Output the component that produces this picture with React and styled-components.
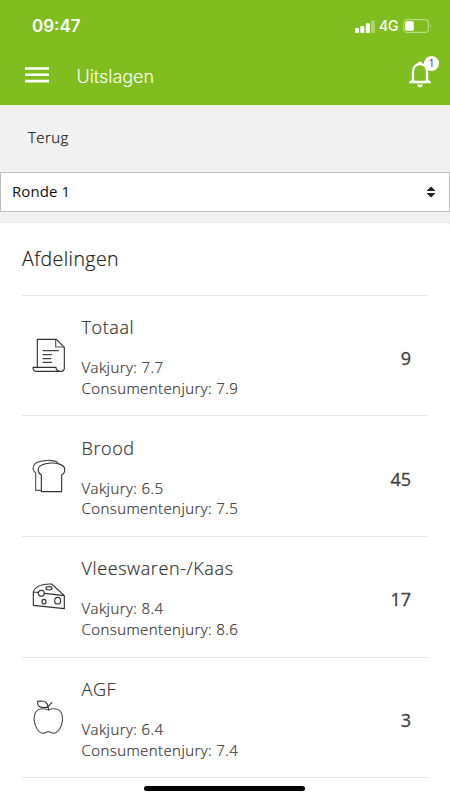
import React from "react";
import styled, { createGlobalStyle } from "styled-components";

const GlobalStyle = createGlobalStyle`
  * { box-sizing: border-box; }
  html, body { margin: 0; padding: 0; background: #fff; overflow: hidden; }
  body { font-family: "Open Sans", sans-serif; color: #333; }
`;

const Screen = styled.div`
  position: relative;
  width: 450px;
  height: 800px;
  overflow: hidden;
  display: flex;
  flex-direction: column;
  background: #f1f1f1;
`;

const Header = styled.header`
  flex: none;
  height: 105px;
  background: #80be1f;
  color: #fff;
  font-family: Inter, sans-serif;
`;

const StatusBar = styled.div`
  height: 52px;
  padding: 0 18px 0 32px;
  display: flex;
  align-items: center;
  justify-content: space-between;
`;

const Time = styled.div`
  font-size: 17px;
  font-weight: 600;
  line-height: 20px;
  letter-spacing: 0;
`;

const StatusIcons = styled.div`
  display: flex;
  align-items: center;
`;

const Network = styled.span`
  width: 20px;
  margin: 0 4px 0 4px;
  font-size: 14px;
  line-height: 18px;
  font-weight: 500;
  letter-spacing: -0.3px;
`;

const Toolbar = styled.div`
  height: 48px;
  padding: 0 11px 0 25px;
  display: flex;
  align-items: center;
`;

const MenuIcon = styled.svg`
  display: block;
  width: 24px;
  height: 16px;
  fill: #fff;
`;

const MenuButton = styled.button`
  padding: 0;
  border: 0;
  background: none;
  margin-top: -2px;
`;

const PageTitle = styled.h1`
  flex: 1;
  margin: 1px 0 0 27.5px;
  font-size: 18px;
  line-height: 24px;
  font-weight: 350;
  letter-spacing: -0.05px;
`;

const BellButton = styled.button`
  position: relative;
  width: 31px;
  height: 34px;
  padding: 0;
  border: 0;
  background: none;
  margin-top: -6px;
  svg { display: block; }
`;

const Badge = styled.span`
  position: absolute;
  top: 0;
  right: 0;
  width: 15px;
  height: 15px;
  border-radius: 50%;
  background: #fff;
  color: #333;
  font-family: "Open Sans", sans-serif;
  font-size: 10px;
  line-height: 15px;
  text-align: center;
`;

const BackBar = styled.nav`
  flex: none;
  height: 67px;
  padding: 0 28px 4px;
  display: flex;
  align-items: center;
  font-size: 15px;
  font-weight: 300;
  letter-spacing: 0.4px;
  color: #222;
  -webkit-text-stroke: 0.25px currentColor;
`;

const Select = styled.div`
  flex: none;
  height: 40px;
  padding: 0 13px 0 11px;
  border: 1px solid #bdbdbd;
  background: #fff;
  display: flex;
  align-items: center;
  justify-content: space-between;
  color: #111;
  font-size: 15px;
  letter-spacing: 0.1px;
`;

const SelectValue = styled.span`
  margin-top: -2px;
`;

const Card = styled.main`
  flex: 1;
  margin-top: 11px;
  padding: 0 22px;
  background: #fff;
  border-radius: 2px 2px 0 0;
  box-shadow: 0 0 2px rgba(0, 0, 0, 0.1);
`;

const SectionTitle = styled.h2`
  height: 71.5px;
  margin: 0;
  font-size: 19.5px;
  line-height: 72px;
  font-weight: 300;
  letter-spacing: 0.45px;
  color: #222;
  -webkit-text-stroke: 0.2px currentColor;
`;

const Row = styled.section`
  height: 120.7px;
  border-top: 1px solid #e7e7e7;
  display: flex;
  align-items: center;
`;

const IconFrame = styled.svg`
  flex: none;
  width: 54px;
  height: 60px;
  margin-top: -1px;
  fill: none;
  stroke: #333;
  stroke-width: 3.4;
  stroke-linejoin: round;
  stroke-linecap: round;
`;

const Details = styled.div`
  flex: 1;
  padding-top: 1.4px;
  margin-left: 5.5px;
`;

const Name = styled.h3`
  margin: 0 0 17px;
  font-size: 18px;
  line-height: 26px;
  font-weight: 300;
  letter-spacing: 0.6px;
  color: #333;
  -webkit-text-stroke: 0.2px currentColor;
`;

const Score = styled.div`
  font-size: 15px;
  line-height: 20.6px;
  font-weight: 300;
  letter-spacing: 0.42px;
  color: #333;
  -webkit-text-stroke: 0.2px currentColor;
`;

const Count = styled.div`
  margin-right: 17px;
  padding-top: 5px;
  font-size: 18px;
  line-height: 24px;
  font-weight: 400;
  color: #444042;
  -webkit-text-stroke: 0.3px currentColor;
`;

const Closing = styled.div`
  border-top: 1px solid #e7e7e7;
`;

const HomeIndicator = styled.div`
  position: absolute;
  left: 144px;
  bottom: 9px;
  width: 161px;
  height: 5px;
  border-radius: 3px;
  background: #000;
`;

const DocumentIcon = () => (
  <IconFrame viewBox="6 0 162 180">
    <path d="M52 126V43H109L133 67V130Q132 140 120 139Q108 138 108 127H39Q38 138 49 139H122" />
    <path d="M107 43V66H133" stroke="#555" />
    <path d="M69 77H115M69 89H95M69 101H92M69 112H95" stroke="#444" />
  </IconFrame>
);

const BreadIcon = () => (
  <IconFrame viewBox="6 2 162 180">
    <path d="M64 139V89Q53 82 55 71C59 47 130 47 134 70Q136 83 125 89V139Z" />
    <path d="M62 135H47V82Q37 76 40 64C44 41 107 42 114 53" stroke="#555" />
  </IconFrame>
);

const CheeseIcon = () => (
  <IconFrame viewBox="6 -1 162 180">
    <path d="M55 78L40 77V117L133 127V88L74 81M40 76C47 58 65 52 95 53L133 88" />
    <circle cx="64" cy="81" r="9" />
    <ellipse cx="87" cy="66" rx="9" ry="5" />
    <ellipse cx="72" cy="106" rx="6" ry="7" />
    <ellipse cx="113" cy="103" rx="9" ry="10" />
  </IconFrame>
);

const AppleIcon = () => (
  <IconFrame viewBox="6 1 162 180">
    <path d="M85 70C72 65 50 62 44 84C38 108 52 137 68 140C76 140 78 135 85 135C92 135 95 141 103 139C120 136 132 106 126 84C120 62 98 65 85 70Z" stroke="#555" />
    <path d="M86 70Q85 63 84 60Q83 43 63 43L53 44Q51 60 66 62Q77 64 84 60L95 48" />
  </IconFrame>
);

const departments = [
  { name: "Totaal", Icon: DocumentIcon, expert: "7.7", consumer: "7.9", count: 9 },
  { name: "Brood", Icon: BreadIcon, expert: "6.5", consumer: "7.5", count: 45 },
  { name: "Vleeswaren-/Kaas", Icon: CheeseIcon, expert: "8.4", consumer: "8.6", count: 17 },
  { name: "AGF", Icon: AppleIcon, expert: "6.4", consumer: "7.4", count: 3 },
];

const SignalIcon = () => (
  <svg width="20" height="13" viewBox="0 0 20 13" fill="#fff">
    <rect x="0" y="8" width="4" height="5" rx="0.8" />
    <rect x="5.3" y="6" width="4" height="7" rx="0.8" />
    <rect x="10.8" y="3.2" width="4" height="9.8" rx="0.8" />
    <rect x="16" y="0.5" width="4" height="12.5" rx="0.8" opacity="0.35" />
  </svg>
);

const BatteryIcon = () => (
  <svg width="29" height="14" viewBox="0 0 29 14">
    <rect x="0.6" y="0.6" width="24.8" height="12.8" rx="3.5" fill="none" stroke="#fff" strokeOpacity="0.45" strokeWidth="1.1" />
    <rect x="2.2" y="2.2" width="8.6" height="9.6" rx="1.5" fill="#fff" />
    <path d="M27 5Q28.7 7 27 9Z" fill="#fff" opacity="0.5" />
  </svg>
);

const BellIcon = () => (
  <svg width="31" height="34" viewBox="0 0 31 34">
    <path d="M5 25V16C5 11 8 8.2 12 8.2S19 11 19 16V25" fill="none" stroke="#fff" strokeWidth="2.3" />
    <path d="M1 27.3V26L4 23.2V24.8H20V23.2L23 26V27.3Z" fill="#fff" />
    <path d="M9.6 8.5V7.8A2.4 2.4 0 0 1 14.4 7.8V8.5ZM9 28.6H15Q14.5 31.3 12 31.3T9 28.6Z" fill="#fff" />
  </svg>
);

const SortIcon = () => (
  <svg width="10" height="12" viewBox="0 0 10 12" fill="#222">
    <path d="M5 0.6L9.5 5H0.5ZM5 11.4L0.5 7H9.5Z" />
  </svg>
);

export default function App() {
  return (
    <>
      <GlobalStyle />
      <Screen>
        <Header>
          <StatusBar>
            <Time>09:47</Time>
            <StatusIcons>
              <SignalIcon />
              <Network>4G</Network>
              <BatteryIcon />
            </StatusIcons>
          </StatusBar>
          <Toolbar>
            <MenuButton aria-label="Menu">
              <MenuIcon viewBox="0 0 24 16">
                <path d="M0 0.2H24V2.8H0ZM0 6.5H24V9.1H0ZM0 12.8H24V15.4H0Z" />
              </MenuIcon>
            </MenuButton>
            <PageTitle>Uitslagen</PageTitle>
            <BellButton>
              <BellIcon />
              <Badge>1</Badge>
            </BellButton>
          </Toolbar>
        </Header>
        <BackBar>Terug</BackBar>
        <Select>
          <SelectValue>Ronde 1</SelectValue>
          <SortIcon />
        </Select>
        <Card>
          <SectionTitle>Afdelingen</SectionTitle>
          {departments.map(({ name, Icon, expert, consumer, count }) => (
            <Row key={name}>
              <Icon />
              <Details>
                <Name>{name}</Name>
                <Score>Vakjury: {expert}</Score>
                <Score>Consumentenjury: {consumer}</Score>
              </Details>
              <Count>{count}</Count>
            </Row>
          ))}
          <Closing />
        </Card>
        <HomeIndicator />
      </Screen>
    </>
  );
}
